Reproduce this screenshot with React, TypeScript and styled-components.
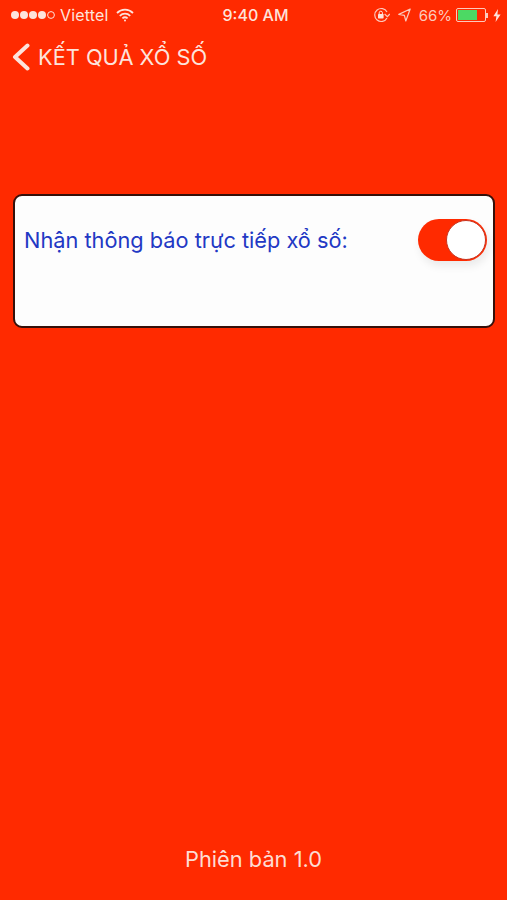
import React from 'react';
import styled, {createGlobalStyle} from "styled-components";

const GlobalStyle = createGlobalStyle`
  * {
    box-sizing: border-box;
  }

  body {
    margin: 0;
    background: #ff2a00;
    font-family: Inter, "Noto Sans", sans-serif;
  }
`

const SignalDots = () => (
    <svg width="45" height="10" viewBox="0 0 45 10">
        <circle cx="5" cy="5" r="4" fill="#fde3dc"/>
        <circle cx="14" cy="5" r="4" fill="#fde3dc"/>
        <circle cx="23" cy="5" r="4" fill="#fde3dc"/>
        <circle cx="32" cy="5" r="4" fill="#fde3dc"/>
        <circle cx="41" cy="5" r="3.4" fill="none" stroke="#fde3dc" strokeWidth="1"/>
    </svg>
);

const Wifi = () => (
    <svg width="18" height="14" viewBox="0 0 18 14" fill="none" stroke="#fde3dc" strokeWidth="1.8">
        <path d="M1 5 C5.5 0.6 12.5 0.6 17 5"/>
        <path d="M3.8 7.8 C6.8 5 11.2 5 14.2 7.8"/>
        <path d="M6.4 10.4 C8 9 10 9 11.6 10.4"/>
        <circle cx="9" cy="12.4" r="1" fill="#fde3dc" stroke="none"/>
    </svg>
);

const RotationLock = () => (
    <svg width="17" height="16" viewBox="0 0 17 16" fill="none" stroke="#fcc9bc" strokeWidth="1.2">
        <path d="M14 11 A6.5 6.5 0 1 1 14 5"/>
        <path d="M11.6 7 L14.4 9.6 L16.8 7" strokeWidth="1.2"/>
        <rect x="5" y="7" width="5.6" height="4.4" rx="0.6" fill="#fde3dc" stroke="none"/>
        <path d="M6.2 7 V5.8 A1.6 1.6 0 0 1 9.4 5.8 V7" stroke="#fde3dc" strokeWidth="1"/>
    </svg>
);

const LocationArrow = () => (
    <svg width="13" height="14" viewBox="0 0 13 14" fill="none" stroke="#fcc9bc" strokeWidth="1.2">
        <path d="M12.2 1 L0.8 6.4 L6.4 7.4 L7.8 13 Z" strokeLinejoin="round"/>
    </svg>
);

const Bolt = () => (
    <svg width="8" height="13" viewBox="0 0 8 13">
        <path d="M5 0 L0.4 7.2 H3.4 L2.6 13 L7.6 5.4 H4.4 Z" fill="#fde3dc"/>
    </svg>
);

const Chevron = () => (
    <svg width="18" height="28" viewBox="0 0 18 28" fill="none" stroke="#fde3dc" strokeWidth="4" strokeLinecap="round" strokeLinejoin="round">
        <path d="M15.5 2.5 L3 14 L15.5 25.5"/>
    </svg>
);

export default function App() {
    return (
        <>
            <GlobalStyle/>
            <Screen>
                <StatusBar>
                    <StatusSide>
                        <SignalDots/>
                        <Carrier>Viettel</Carrier>
                        <Wifi/>
                    </StatusSide>
                    <Clock>9:40 AM</Clock>
                    <StatusRight>
                        <RotationLock/>
                        <LocationArrow/>
                        <Percent>66%</Percent>
                        <BatteryWrap>
                            <Battery>
                                <BatteryLevel $level={72}/>
                            </Battery>
                            <BatteryCap/>
                        </BatteryWrap>
                        <Bolt/>
                    </StatusRight>
                </StatusBar>
                <Header>
                    <Chevron/>
                    <Title>KẾT QUẢ XỔ SỐ</Title>
                </Header>
                <Card>
                    <Label>Nhận thông báo trực tiếp xổ số:</Label>
                    <Toggle>
                        <Knob/>
                    </Toggle>
                </Card>
                <Version>Phiên bản 1.0</Version>
            </Screen>
        </>
    );
}

const Screen = styled.div`
  width: 507px;
  height: 900px;
  display: flex;
  flex-direction: column;
  background: #ff2a00;
  overflow: hidden;
`

const StatusBar = styled.div`
  height: 30px;
  padding: 0 6px 0 10px;
  display: grid;
  grid-template-columns: 1fr auto 1fr;
  align-items: center;
  color: #fde3dc;
  font-size: 16px;
`

const StatusSide = styled.div`
  display: flex;
  align-items: center;
  gap: 5px;
`

const StatusRight = styled(StatusSide)`
  justify-content: flex-end;
  gap: 8px;
`

const Carrier = styled.span`
  margin-right: 3px;
  letter-spacing: 0.15px;
`

const Clock = styled.span`
  font-weight: 500;
`

const Percent = styled.span`
  margin-right: -4px;
  color: #fcc9bc;
  font-size: 15px;
`

const BatteryWrap = styled.div`
  display: flex;
  align-items: center;
  margin-right: -3px;
`

const Battery = styled.div`
  width: 30px;
  height: 14px;
  padding: 1px;
  border: 1px solid #fcc9bc;
  border-radius: 2px;
`

const BatteryLevel = styled.div<{$level: number}>`
  width: ${p => p.$level}%;
  height: 100%;
  background: #4cd964;
`

const BatteryCap = styled.div`
  width: 2px;
  height: 5px;
  background: #fcc9bc;
`

const Header = styled.div`
  height: 54px;
  padding-left: 12px;
  display: flex;
  align-items: center;
  gap: 8px;
`

const Title = styled.span`
  color: #fde3dc;
  font-size: 21.8px;
`

const Card = styled.div`
  margin: 110px 12px 0 13px;
  height: 134px;
  padding: 23px 6px 0 9px;
  display: flex;
  justify-content: space-between;
  align-items: flex-start;
  background: #fdfdfd;
  border: 2px solid #35100a;
  border-radius: 9px;
`

const Label = styled.span`
  margin-top: 5px;
  color: #2238c4;
  font-size: 21.75px;
  line-height: 32px;
`

const Toggle = styled.div`
  width: 69px;
  height: 42px;
  padding: 1px;
  display: flex;
  justify-content: flex-end;
  background: #ff2a00;
  border-radius: 21px;
  box-shadow: 2px 5px 8px rgba(0, 0, 0, 0.08);
`

const Knob = styled.div`
  width: 40px;
  height: 40px;
  background: #fff;
  border: 1.5px solid #c8341f;
  border-radius: 50%;
`

const Version = styled.div`
  margin-top: auto;
  padding-bottom: 27px;
  color: #fddcd3;
  font-size: 21.8px;
  line-height: 28px;
  text-align: center;
`
